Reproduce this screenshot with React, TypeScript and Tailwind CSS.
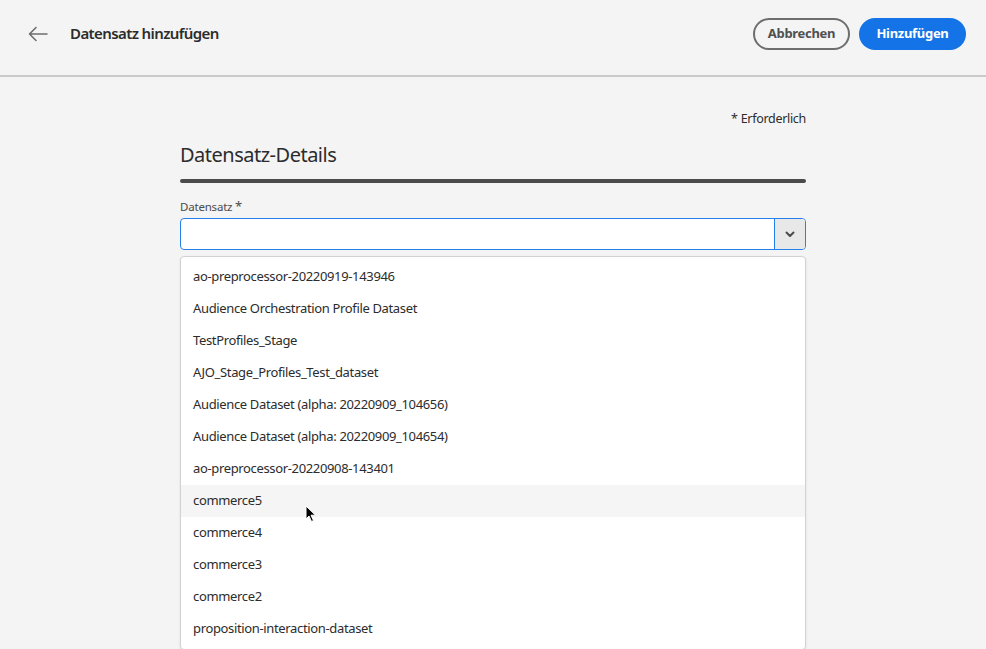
import React from 'react';

const datasets = [
  'ao-preprocessor-20220919-143946',
  'Audience Orchestration Profile Dataset',
  'TestProfiles_Stage',
  'AJO_Stage_Profiles_Test_dataset',
  'Audience Dataset (alpha: 20220909_104656)',
  'Audience Dataset (alpha: 20220909_104654)',
  'ao-preprocessor-20220908-143401',
  'commerce5',
  'commerce4',
  'commerce3',
  'commerce2',
  'proposition-interaction-dataset',
];

function BackArrow() {
  return (
    <svg width="20" height="16" viewBox="0 0 20 16" fill="none" stroke="#6e6e6e" strokeWidth="1.6" strokeLinecap="round" strokeLinejoin="round">
      <path d="M19 8H1.5M8 1.5L1.5 8L8 14.5" />
    </svg>
  );
}

function Chevron() {
  return (
    <svg width="10" height="7" viewBox="0 0 10 7" fill="none" stroke="#4b4b4b" strokeWidth="2" strokeLinecap="round" strokeLinejoin="round">
      <path d="M1.5 1.5L5 5L8.5 1.5" />
    </svg>
  );
}

function Cursor() {
  return (
    <svg width="12" height="18" viewBox="0 0 12 18" className="absolute left-[124px] top-[20px]">
      <path d="M1 1L1 14L4 11L6.5 16.5L8.5 15.5L6 10.2L10.5 10.2Z" fill="#000" stroke="#fff" strokeWidth="1" strokeLinejoin="round" />
    </svg>
  );
}

export default function App() {
  return (
    <div className="w-full bg-[#f4f4f4] text-[#2c2c2c] font-['Noto_Sans',sans-serif] overflow-hidden h-[649px]">
      <header className="h-[77px] flex items-center justify-between border-b-2 border-[#cacaca] pl-[28px] pr-[20px]">
        <div className="flex items-center gap-[22px] -mt-[8px]">
          <BackArrow />
          <h1 className="text-[15px] font-semibold tracking-[-0.6px] text-[#2c2c2c]">Datensatz hinzufügen</h1>
        </div>
        <div className="flex items-center gap-[9px] -mt-[8px]">
          <button className="h-[32px] w-[97px] rounded-full border-2 border-[#6e6e6e] text-[13px] font-bold tracking-[-0.3px] text-[#505050]">Abbrechen</button>
          <button className="h-[32px] w-[107px] rounded-full bg-[#1473e6] text-[13px] font-bold tracking-[-0.3px] text-white">Hinzufügen</button>
        </div>
      </header>

      <main className="w-[626px] ml-[180px] pt-[33px]">
        <p className="text-right text-[12.5px] tracking-[-0.3px] text-[#2c2c2c] leading-[18px]">* Erforderlich</p>
        <h2 className="text-[20px] leading-[26px] mt-[14px] tracking-[-0.5px] text-[#2c2c2c]">Datensatz-Details</h2>
        <div className="h-[4px] rounded-full bg-[#4b4b4b] mt-[11px]" />
        <label className="block text-[11.5px] tracking-[-0.2px] text-[#4b4b4b] mt-[15px] leading-[16px]">
          Datensatz <span className="text-[13px]">*</span>
        </label>
        <div className="mt-[3px] flex h-[32px] rounded-[4px] border border-[#2680eb] bg-white overflow-hidden">
          <div className="flex-1" />
          <div className="w-[31px] border-l border-[#2680eb] bg-[#e8e8e8] flex items-center justify-center">
            <Chevron />
          </div>
        </div>
        <ul className="mt-[6px] rounded-[4px] border border-[#d2d2d2] bg-white pt-[4px] pb-[4px] shadow-[0_1px_3px_rgba(0,0,0,0.08)]">
          {datasets.map((d) => (
            <li
              key={d}
              className={`relative h-[32px] flex items-center px-[12px] text-[13px] tracking-[-0.35px] text-[#2c2c2c] ${d === 'commerce5' ? 'bg-[#f5f5f5]' : ''}`}
            >
              {d}
              {d === 'commerce5' && <Cursor />}
            </li>
          ))}
        </ul>
      </main>
    </div>
  );
}
